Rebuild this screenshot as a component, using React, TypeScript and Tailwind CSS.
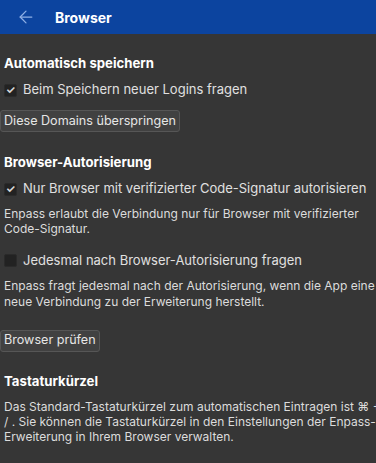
import { ArrowLeft } from "lucide-react";

function Checkbox({ checked }: { checked: boolean }) {
  return (
    <span className="w-[13px] h-[13px] shrink-0 rounded-[2px] bg-[#222222] border border-[#2a2a2a] flex items-center justify-center text-[11px] font-bold leading-none text-[#d8d8d8]">
      {checked ? "✓" : ""}
    </span>
  );
}

function CheckRow({ checked, label, className }: { checked: boolean; label: string; className?: string }) {
  return (
    <div className={"flex items-center gap-[6px] pl-[4px] h-[20px] text-[13px] text-[#e0e0e0] whitespace-nowrap " + (className ?? "")}>
      <Checkbox checked={checked} />
      <span>{label}</span>
    </div>
  );
}

function Button({ label, className }: { label: string; className?: string }) {
  return (
    <div className={"inline-flex items-center h-[22px] px-[3px] rounded-[3px] bg-[#414141] border border-[#565656] text-[12.6px] text-[#e6e6e6] whitespace-nowrap " + (className ?? "")}>
      {label}
    </div>
  );
}

function Heading({ text, className }: { text: string; className?: string }) {
  return (
    <h2 className={"pl-[4px] h-[20px] leading-[20px] text-[13.2px] font-bold text-white " + (className ?? "")}>{text}</h2>
  );
}

function Desc({ lines, className }: { lines: string[]; className?: string }) {
  return (
    <p className={"pl-[4px] text-[12px] leading-[15.2px] text-[#dcdcdc] whitespace-nowrap " + (className ?? "")}>
      {lines.map((l, i) => (
        <span key={i} className="block">
          {l}
        </span>
      ))}
    </p>
  );
}

export default function App() {
  return (
    <div
      className="w-[376px] h-[463px] overflow-hidden bg-[#363636] flex flex-col"
      style={{ fontFamily: "Inter, 'Noto Sans', sans-serif" }}
    >
      {/* header */}
      <div className="h-[34px] shrink-0 bg-[#0c449f] flex items-center">
        <ArrowLeft className="ml-[16px] w-[20px] h-[20px] text-[#8fb0e6]" strokeWidth={1.5} />
        <span className="ml-[19px] text-[14px] font-bold text-white">Browser</span>
      </div>

      <div className="flex flex-col items-start">
        <Heading className="mt-[19px]" text="Automatisch speichern" />
        <CheckRow checked className="mt-[7px]" label="Beim Speichern neuer Logins fragen" />
        <Button className="mt-[10px]" label="Diese Domains überspringen" />

        <Heading className="mt-[20px]" text="Browser-Autorisierung" />
        <CheckRow checked className="mt-[7px]" label="Nur Browser mit verifizierter Code-Signatur autorisieren" />
        <Desc
          className="mt-[7px]"
          lines={["Enpass erlaubt die Verbindung nur für Browser mit verifizierter", "Code-Signatur."]}
        />
        <CheckRow checked={false} className="mt-[14px]" label="Jedesmal nach Browser-Autorisierung fragen" />
        <Desc
          className="mt-[8px]"
          lines={[
            "Enpass fragt jedesmal nach der Autorisierung, wenn die App eine",
            "neue Verbindung zu der Erweiterung herstellt.",
          ]}
        />
        <Button className="mt-[21px]" label="Browser prüfen" />

        <Heading className="mt-[19px]" text="Tastaturkürzel" />
        <Desc
          className="mt-[8px]"
          lines={[
            "Das Standard-Tastaturkürzel zum automatischen Eintragen ist ⌘ +",
            "/ . Sie können die Tastaturkürzel in den Einstellungen der Enpass-",
            "Erweiterung in Ihrem Browser verwalten.",
          ]}
        />
      </div>
    </div>
  );
}
